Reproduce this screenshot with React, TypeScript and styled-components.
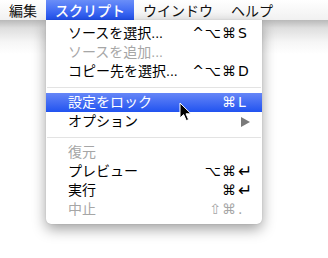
import React from "react";
import styled, { createGlobalStyle } from "styled-components";

const GlobalStyle = createGlobalStyle`
  html, body {
    margin: 0;
    padding: 0;
    background: #fff;
  }
  body {
    font-family: "DejaVu Sans", "Noto Sans CJK JP", sans-serif;
  }
`;

type Item =
  | { kind: "sep" }
  | {
      kind: "item";
      label: string;
      mods?: string;
      keyChar?: string;
      big?: boolean;
      disabled?: boolean;
      active?: boolean;
      submenu?: boolean;
    };

const items: Item[] = [
  { kind: "item", label: "ソースを選択...", mods: "^⌥⌘", keyChar: "S" },
  { kind: "item", label: "ソースを追加...", disabled: true },
  { kind: "item", label: "コピー先を選択...", mods: "^⌥⌘", keyChar: "D" },
  { kind: "sep" },
  { kind: "item", label: "設定をロック", mods: "⌘", keyChar: "L", active: true },
  { kind: "item", label: "オプション", submenu: true },
  { kind: "sep" },
  { kind: "item", label: "復元", disabled: true },
  { kind: "item", label: "プレビュー", mods: "⌥⌘", keyChar: "↵", big: true },
  { kind: "item", label: "実行", mods: "⌘", keyChar: "↵", big: true },
  { kind: "item", label: "中止", mods: "⇧⌘", keyChar: ".", disabled: true },
];

const titles = ["編集", "スクリプト", "ウインドウ", "ヘルプ"];

const App: React.FC = () => {
  return (
    <>
      <GlobalStyle />
      <Screen>
        <MenuBar>
          {titles.map((t) => (
            <MenuTitle key={t} $open={t === "スクリプト"}>
              {t}
            </MenuTitle>
          ))}
        </MenuBar>
        <Desktop>
          <Menu>
            {items.map((it, i) =>
              it.kind === "sep" ? (
                <Separator key={i} />
              ) : (
                <Row key={i} $active={!!it.active} $disabled={!!it.disabled}>
                  <Label>{it.label}</Label>
                  {it.submenu ? (
                    <Arrow />
                  ) : it.keyChar ? (
                    <Shortcut>
                      <Mods>{it.mods}</Mods>
                      <KeyChar $big={!!it.big}>{it.keyChar}</KeyChar>
                    </Shortcut>
                  ) : null}
                </Row>
              )
            )}
          </Menu>
        </Desktop>
        <Cursor width="14" height="20" viewBox="0 0 14 20">
          <path
            d="M1 1 L1 16 L4.6 12.6 L7.3 18.6 L9.6 17.6 L7 11.8 L12 11.8 Z"
            fill="#000"
            stroke="#fff"
            strokeWidth="1"
            strokeLinejoin="round"
          />
        </Cursor>
      </Screen>
    </>
  );
};

const Screen = styled.div`
  position: relative;
  width: 328px;
  height: 258px;
  overflow: hidden;
  display: flex;
  flex-direction: column;
`;

const MenuBar = styled.div`
  display: flex;
  height: 20px;
  background: linear-gradient(#ffffff, #f1f1f1);
`;

const MenuTitle = styled.div<{ $open: boolean }>`
  padding: 0 9px;
  height: 20px;
  line-height: 20px;
  font-family: "Noto Sans CJK JP", sans-serif;
  font-size: 14px;
  font-weight: ${(p) => (p.$open ? 500 : 400)};
  color: ${(p) => (p.$open ? "#fff" : "#111")};
  background: ${(p) =>
    p.$open ? "linear-gradient(#6a8ef8, #1f50f0)" : "transparent"};
`;

const Desktop = styled.div`
  flex: 1;
  padding-left: 46px;
  background: linear-gradient(#b9b9b9 0px, #dedede 8px, #f6f6f6 22px, #fff 34px);
`;

const Menu = styled.div`
  width: 216px;
  padding: 4px 0 5px;
  background: #fff;
  border-radius: 0 0 5px 5px;
  box-shadow: 0 5px 14px rgba(0, 0, 0, 0.38), 0 0 1px rgba(0, 0, 0, 0.25);
`;

const Row = styled.div<{ $active: boolean; $disabled: boolean }>`
  display: flex;
  align-items: center;
  height: 19px;
  padding: 0 10px 0 22px;
  font-size: 14px;
  color: ${(p) => (p.$active ? "#fff" : p.$disabled ? "#a6a6a6" : "#000")};
  background: ${(p) =>
    p.$active ? "linear-gradient(#6686f7, #2153f0)" : "transparent"};
`;

const Label = styled.span`
  flex: 1;
  font-family: "Liberation Sans", "Noto Sans CJK JP", sans-serif;
  line-height: 19px;
  white-space: nowrap;
`;

const Shortcut = styled.span`
  display: flex;
  align-items: center;
  font-family: "DejaVu Sans", sans-serif;
  font-size: 14px;
  line-height: 19px;
`;

const Mods = styled.span`
  text-align: right;
  letter-spacing: 1px;
`;

const KeyChar = styled.span<{ $big: boolean }>`
  width: 14px;
  padding-left: 1px;
  text-align: left;
  font-size: ${(p) => (p.$big ? "17px" : "14px")};
`;

const Arrow = styled.span`
  width: 0;
  height: 0;
  margin-right: 2px;
  border-top: 5px solid transparent;
  border-bottom: 5px solid transparent;
  border-left: 9px solid #7a7a7a;
`;

const Separator = styled.div`
  height: 12px;
  display: flex;
  align-items: center;
  &::after {
    content: "";
    flex: 1;
    height: 1px;
    margin: 0 1px;
    background: #e3e3e3;
  }
`;

const Cursor = styled.svg`
  position: absolute;
  left: 179px;
  top: 102px;
`;

export default App;
